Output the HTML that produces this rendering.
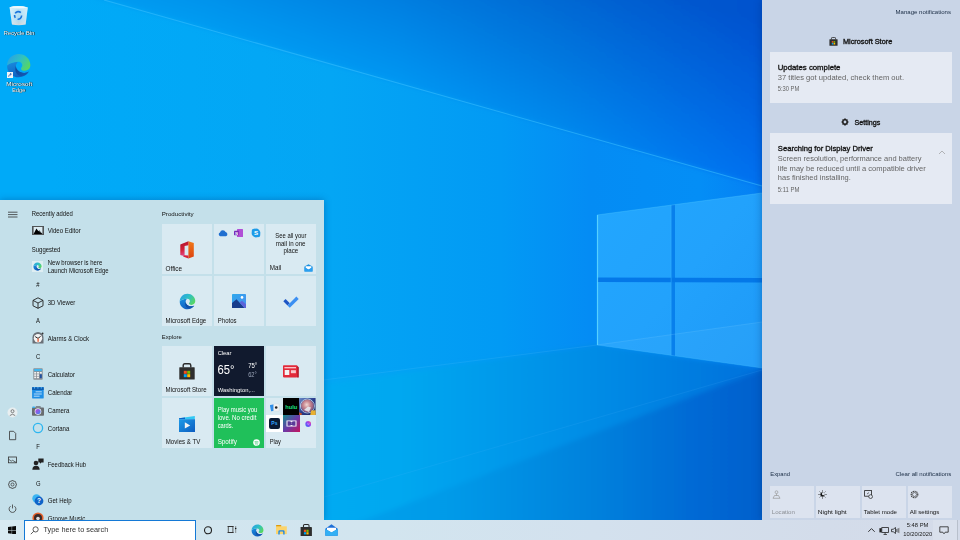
<!DOCTYPE html>
<html><head><meta charset="utf-8">
<style>
*{margin:0;padding:0;box-sizing:border-box}
html,body{width:960px;height:540px;overflow:hidden;font-family:"Liberation Sans",sans-serif;position:relative;background:#0a8ae6}
.abs{position:absolute}
#wall{position:absolute;left:0;top:0;width:960px;height:540px}
#start{position:absolute;left:0;top:200px;width:324px;height:320px;background:#c4e0ea;overflow:hidden;box-shadow:0 0 7px rgba(0,40,110,0.35)}
#ac{position:absolute;left:762px;top:0;width:198px;height:520px;background:#c9d5e7;box-shadow:-1px 0 7px rgba(0,40,110,0.3)}
#tb{position:absolute;left:0;top:520px;width:960px;height:20px;background:linear-gradient(90deg,#d1e6ef 0%,#d2e5ef 40%,#d3e1ee 62%,#d3dcea 86%,#d4dbe9 100%)}
.dlab{font-size:5.7px;color:#fff;text-shadow:0 0 0.6px rgba(0,0,0,0.5),0.4px 0.4px 0.4px rgba(0,0,0,0.4)}
.t{position:absolute;white-space:nowrap;color:#1a1a1a;line-height:1}
.sm6{font-size:6px;color:#1b1b1b}
.sm6c{font-size:6px;color:#1b1b1b}
.sm6w{font-size:6px;color:#fff}
.tile{position:absolute;width:50px;height:50px;background:#d9eaf2}
.card{background:#e5eaf3}
.qa{top:486px;width:44px;height:32px;background:#dce3ef}
</style></head><body>
<svg id="wall" width="960" height="540" viewBox="0 0 960 540">
<defs>
<filter id="bl" x="-10%" y="-10%" width="120%" height="120%"><feGaussianBlur stdDeviation="2.5"/></filter>
<filter id="bl3" x="-50%" y="-50%" width="200%" height="200%"><feGaussianBlur stdDeviation="14"/></filter>
<linearGradient id="gA" gradientUnits="userSpaceOnUse" x1="200" y1="0" x2="762" y2="0">
<stop offset="0" stop-color="#029cf2"/><stop offset="0.356" stop-color="#0496f2"/><stop offset="0.64" stop-color="#0488ec"/><stop offset="1" stop-color="#0670f0"/>
</linearGradient>
<linearGradient id="gAd" gradientUnits="userSpaceOnUse" x1="700" y1="168.5" x2="743.5" y2="14.6">
<stop offset="0" stop-color="#0528a0" stop-opacity="0"/><stop offset="1" stop-color="#0528a0" stop-opacity="0.42"/>
</linearGradient>
<linearGradient id="gB" gradientUnits="userSpaceOnUse" x1="0" y1="0" x2="760" y2="0">
<stop offset="0.066" stop-color="#00aaf8"/><stop offset="0.434" stop-color="#04a6f4"/><stop offset="0.658" stop-color="#029af4"/><stop offset="0.776" stop-color="#048cf4"/><stop offset="0.92" stop-color="#048ef6"/><stop offset="1" stop-color="#0580f4"/>
</linearGradient>
<linearGradient id="gC" gradientUnits="userSpaceOnUse" x1="324" y1="0" x2="762" y2="0">
<stop offset="0" stop-color="#04aaf2"/><stop offset="0.17" stop-color="#04a8f0"/><stop offset="0.68" stop-color="#0488e4"/><stop offset="1" stop-color="#0670dc"/>
</linearGradient>
<linearGradient id="gD" gradientUnits="userSpaceOnUse" x1="324" y1="0" x2="762" y2="0">
<stop offset="0" stop-color="#06a2ec"/><stop offset="0.29" stop-color="#069ae8"/><stop offset="0.63" stop-color="#0680dc"/><stop offset="0.86" stop-color="#0668d4"/><stop offset="1" stop-color="#0660cc"/>
</linearGradient>
<linearGradient id="gL" gradientUnits="userSpaceOnUse" x1="597" y1="215" x2="762" y2="350">
<stop offset="0" stop-color="#22a6fe"/><stop offset="0.5" stop-color="#22a2fc"/><stop offset="1" stop-color="#1e9af8"/>
</linearGradient>
</defs>
<rect width="960" height="540" fill="url(#gB)"/>
<g filter="url(#bl)">
<polygon points="-60,-60 960,-60 960,220 762,186 104,0 -60,-46" fill="url(#gA)"/>
<polygon points="-60,-60 960,-60 960,220 762,186 104,0 -60,-46" fill="url(#gAd)"/>
<polygon points="-60,438 597,345 762,368 1000,400 1000,600 -60,600" fill="url(#gC)"/>
<polygon points="-60,680 762,370 1000,380 1000,600 -60,600" fill="url(#gD)"/>
</g>
<polygon points="597,215 762,193 762,368 597,345" fill="url(#gL)"/>
<polygon points="597,345 762,322 762,368" fill="#40b0fc" opacity="0.25"/>
<polygon points="671,205 675,204.5 675,356 671,355.5" fill="#0880ec"/>
<polygon points="597,277.6 762,278 762,282.4 597,282" fill="#0478e8"/>
<line x1="104" y1="0" x2="762" y2="186" stroke="#3cc0ff" stroke-width="1.1" opacity="0.55"/>
<line x1="597.5" y1="215" x2="597.5" y2="345" stroke="#60d8ff" stroke-width="1.2" opacity="0.85"/>
<line x1="671.2" y1="205" x2="671.2" y2="355.5" stroke="#40c0ff" stroke-width="0.7" opacity="0.6"/>
<line x1="597" y1="215" x2="762" y2="193" stroke="#50c8ff" stroke-width="0.8" opacity="0.45"/>
<line x1="597" y1="345" x2="762" y2="368" stroke="#50c8ff" stroke-width="0.8" opacity="0.3"/>
<line x1="597" y1="345" x2="762" y2="322" stroke="#70c8ff" stroke-width="0.8" opacity="0.3"/>
<line x1="597" y1="345" x2="300" y2="383" stroke="#6ac8ff" stroke-width="1" opacity="0.15"/>
<line x1="762" y1="370" x2="300" y2="504" stroke="#5ab8ff" stroke-width="1" opacity="0.12"/>
</svg>
<!-- DESKTOP ICONS -->
<svg class="abs" style="left:9px;top:5px" width="20" height="21" viewBox="0 0 20 21"><defs><linearGradient id="rb" x1="0" y1="0" x2="0" y2="1"><stop offset="0" stop-color="#d4ecf8"/><stop offset="0.7" stop-color="#bfe0f2"/><stop offset="1" stop-color="#ecdcd4"/></linearGradient><linearGradient id="rb2" x1="0" y1="0" x2="1" y2="0"><stop offset="0" stop-color="#fff" stop-opacity="0.5"/><stop offset="0.5" stop-color="#fff" stop-opacity="0"/><stop offset="1" stop-color="#fff" stop-opacity="0.4"/></linearGradient></defs><path d="M0.6 2.2Q9 -0.2 18.8 2.4L16.6 19.6Q9.6 21 3 19.6Z" fill="url(#rb)" opacity="0.88"/><path d="M0.6 2.2Q9 -0.2 18.8 2.4L16.6 19.6Q9.6 21 3 19.6Z" fill="url(#rb2)"/><path d="M0.6 2.2Q9 -0.2 18.8 2.4Q9.6 4.6 0.6 2.2Z" fill="#eef8fc"/><path d="M6.2 8.4A3.6 3.6 0 0 1 11.8 7.6M12.6 10.6A3.6 3.6 0 0 1 8.6 14.2M6.4 12.8A3.6 3.6 0 0 1 5.6 10" fill="none" stroke="#1b74dc" stroke-width="1.6"/></svg>
<svg class="abs" style="left:6.3px;top:53.3px" width="25.4" height="25.4" viewBox="0 0 24 24"><use href="#edge"/></svg>
<div class="abs" style="left:7px;top:71.5px;width:6px;height:6px;background:#f2f4f6"></div>
<svg class="abs" style="left:7px;top:71.5px" width="6" height="6" viewBox="0 0 6 6"><path d="M1.6 4.8Q1.6 2.4 4 2.2M3 1.2L4.4 2.2L3.2 3.3" fill="none" stroke="#1a50a8" stroke-width="0.7"/></svg>
<div id="start"></div>
<!-- START MENU CONTENT -->
<svg width="0" height="0" style="position:absolute"><defs>
<linearGradient id="eg1" x1="0" y1="0.2" x2="1" y2="0.7"><stop offset="0" stop-color="#2aa0e4"/><stop offset="0.5" stop-color="#2fc0c4"/><stop offset="1" stop-color="#5ad85c"/></linearGradient>
<linearGradient id="eg2" x1="0" y1="0" x2="0.4" y2="1"><stop offset="0" stop-color="#1a8ee0"/><stop offset="1" stop-color="#1060c0"/></linearGradient>
<linearGradient id="eg3" x1="0" y1="0" x2="1" y2="0.3"><stop offset="0" stop-color="#0c4aa0"/><stop offset="1" stop-color="#1458b0"/></linearGradient>
<symbol id="edge" viewBox="0 0 24 24">
<path d="M1 12C1 18.5 6 23 12 23C16 23 19.6 21 21.6 17.6C20.4 18.4 18.8 18.8 17.2 18.8C13 18.8 9.4 16 9.4 12.4C9.4 10.6 10.4 9.2 11.6 8.2C6.2 8.4 2 10.4 1 12Z" fill="url(#eg2)"/>
<path d="M9.4 12.4C9.4 16 13 18.8 17.2 18.8C18.8 18.8 20.4 18.4 21.6 17.6C19.8 20.4 16.4 22.2 13 21.6C10.6 21 8.8 18.6 8.8 15.6C8.8 14.2 9 13.2 9.4 12.4Z" fill="url(#eg3)"/>
<path d="M1 12C2 10.4 6.2 8.4 11.6 8.2C14.4 8.2 15.6 10.2 15.4 12C15.2 13.2 14.2 13.8 14.2 14.8C14.2 15.8 15.4 16.8 17.6 16.8C20.6 16.8 23 14.8 23 11.4C23 5.6 18 1 12 1C5.8 1 1 5.8 1 12Z" fill="url(#eg1)"/>
</symbol>
</defs></svg>
<div id="sm">
<!-- left rail -->
<svg class="abs" style="left:7px;top:210px" width="12" height="9" viewBox="0 0 12 9"><path d="M1 2.2H10.5M1 4.6H10.5M1 7H10.5" stroke="#333" stroke-width="0.8" fill="none"/></svg>
<svg class="abs" style="left:6px;top:406px" width="13" height="13" viewBox="0 0 13 13"><circle cx="6.5" cy="6.5" r="5" fill="#e8eef0"/><circle cx="6.5" cy="5.2" r="1.5" fill="none" stroke="#555" stroke-width="0.7"/><path d="M3.8 9.6Q6.5 6.8 9.2 9.6" fill="none" stroke="#555" stroke-width="0.7"/></svg>
<svg class="abs" style="left:7px;top:430px" width="11" height="11" viewBox="0 0 11 11"><path d="M2.5 1.3H6.6L8.7 3.4V9.7H2.5Z" fill="none" stroke="#333" stroke-width="0.8"/></svg>
<svg class="abs" style="left:7px;top:455px" width="11" height="10" viewBox="0 0 11 10"><rect x="1.4" y="2" width="8" height="5.8" fill="none" stroke="#333" stroke-width="0.8"/><path d="M1.6 4.2L4.2 6.2L5.6 5.3L9.2 7.5" fill="none" stroke="#333" stroke-width="0.7"/></svg>
<svg class="abs" style="left:8px;top:479.6px" width="9" height="9" viewBox="0 0 9 9"><path d="M3.6 0.6H5.4L5.8 1.6L6.9 1.1L7.9 2.1L7.4 3.2L8.4 3.6V5.4L7.4 5.8L7.9 6.9L6.9 7.9L5.8 7.4L5.4 8.4H3.6L3.2 7.4L2.1 7.9L1.1 6.9L1.6 5.8L0.6 5.4V3.6L1.6 3.2L1.1 2.1L2.1 1.1L3.2 1.6Z" fill="none" stroke="#3a3a3a" stroke-width="0.75" stroke-linejoin="round"/><circle cx="4.5" cy="4.5" r="1.5" fill="none" stroke="#3a3a3a" stroke-width="0.75"/></svg>
<svg class="abs" style="left:8.2px;top:504px" width="9" height="9" viewBox="0 0 9 9"><path d="M2.6 2.2A3.4 3.4 0 1 0 6.4 2.2" fill="none" stroke="#3a3a3a" stroke-width="0.8"/><path d="M4.5 0.5V4.4" stroke="#3a3a3a" stroke-width="0.8"/></svg>

<svg class="abs" style="left:32px;top:226px" width="12" height="9" viewBox="0 0 12 9"><rect x="0" y="0" width="12" height="9" fill="#505456"/><rect x="1.6" y="1" width="8.8" height="7" fill="#dcecf2"/><path d="M1.6 8L4.4 2.4L6.4 5.2L7.2 4.2L10.4 8Z" fill="#000"/><path d="M7.4 4.8L8.4 6.6" stroke="#dcecf2" stroke-width="0.4"/></svg>
<div class="abs" style="left:32px;top:261px;width:11px;height:11px;background:#dfeef3"></div>
<svg class="abs" style="left:33px;top:262px" width="9" height="9" viewBox="0 0 24 24"><use href="#edge"/></svg>
<svg class="abs" style="left:32px;top:297px" width="12" height="12" viewBox="0 0 12 12"><path d="M6 0.8L11 3.4V8.8L6 11.3L1 8.8V3.4Z M1 3.4L6 6L11 3.4 M6 6V11.3" fill="none" stroke="#222" stroke-width="0.9"/></svg>
<svg class="abs" style="left:32px;top:332px" width="12" height="12" viewBox="0 0 12 12"><path d="M0.5 11.5V5.5A5.5 5.5 0 0 1 11.5 5.5V11.5Z" fill="#6b7178"/><circle cx="6" cy="6.3" r="4.2" fill="#f4f4f4"/><path d="M3.2 4.6L6 6.4L8.6 4.4" stroke="#222" stroke-width="1" fill="none"/><rect x="5.4" y="6.4" width="1.4" height="3.4" fill="#e8643c"/><circle cx="10.6" cy="1.5" r="0.9" fill="#333"/></svg>
<svg class="abs" style="left:33px;top:368px" width="10" height="12" viewBox="0 0 10 12"><rect x="0.3" y="0.3" width="9.4" height="11.4" rx="0.8" fill="#8a9096"/><rect x="1.2" y="1" width="7.6" height="2.2" fill="#3fb6f0"/><g fill="#f2f2f2"><rect x="1.2" y="4" width="2" height="1.6"/><rect x="4" y="4" width="2" height="1.6"/><rect x="6.8" y="4" width="2" height="1.6"/><rect x="1.2" y="6.3" width="2" height="1.6"/><rect x="4" y="6.3" width="2" height="1.6"/><rect x="1.2" y="8.6" width="2" height="1.6"/><rect x="4" y="8.6" width="2" height="1.6"/></g><rect x="6.8" y="6.3" width="2" height="3.9" fill="#1f4fa0"/></svg>
<svg class="abs" style="left:32px;top:386.5px" width="12" height="12" viewBox="0 0 12 12"><rect x="0.1" y="0.2" width="11.6" height="11.3" rx="0.4" fill="#1f8fe6"/><rect x="0.1" y="0.2" width="11.6" height="2.8" fill="#0d5cb0"/><g fill="#4ab0f4"><rect x="2" y="0" width="1" height="1.6"/><rect x="5.4" y="0" width="1" height="1.6"/><rect x="8.8" y="0" width="1" height="1.6"/></g><g stroke="#eaf6ff" stroke-width="0.75"><path d="M3.6 4.8H9.8M1.8 7H9.8M1.8 9.2H7.6"/></g></svg>
<svg class="abs" style="left:32px;top:405.5px" width="12" height="10" viewBox="0 0 12 10"><rect x="0" y="1.6" width="12" height="8.2" rx="0.8" fill="#686c70"/><path d="M3.2 1.6L4 0.2H8.4L9.2 1.6Z" fill="#686c70"/><rect x="0.4" y="0.4" width="2.6" height="1.6" rx="0.5" fill="#34aef0"/><defs><linearGradient id="lens" x1="0" y1="0" x2="1" y2="1"><stop offset="0" stop-color="#c040e0"/><stop offset="1" stop-color="#3a8af0"/></linearGradient></defs><circle cx="6" cy="5.6" r="3.3" fill="#e8eef6"/><circle cx="6" cy="5.6" r="2.6" fill="url(#lens)"/></svg>
<svg class="abs" style="left:32px;top:422px" width="12" height="12" viewBox="0 0 12 12"><circle cx="6" cy="6" r="4.6" fill="none" stroke="#2cb6f0" stroke-width="1.3"/></svg>
<svg class="abs" style="left:32px;top:458px" width="12" height="12" viewBox="0 0 12 12"><circle cx="4" cy="5" r="2.3" fill="#222"/><path d="M0.3 11.8Q0.5 7.8 4 7.8Q7.5 7.8 7.7 11.8Z" fill="#222"/><path d="M6.3 0.6H11.6V4.6H9.4L8 5.8V4.6H6.3Z" fill="#222"/></svg>
<svg class="abs" style="left:32px;top:494px" width="12" height="12" viewBox="0 0 12 12"><circle cx="4.5" cy="4.5" r="4.2" fill="#3ab4f2"/><circle cx="7" cy="7" r="4.4" fill="#1064c8"/><text x="7" y="9.4" font-size="6.5" font-family="Liberation Sans" font-weight="bold" fill="#fff" text-anchor="middle">?</text></svg>
<svg class="abs" style="left:32px;top:512px" width="12" height="12" viewBox="0 0 12 12"><circle cx="6" cy="6" r="5.6" fill="#e8622c"/><circle cx="6" cy="6" r="4" fill="#3a2a2a"/><circle cx="6" cy="6.5" r="1.8" fill="#e0e0e0"/></svg>

<!-- tiles -->
<div class="tile" style="left:162px;top:224px"></div>
<div class="tile" style="left:214px;top:224px"></div>
<div class="tile" style="left:266px;top:224px"></div>
<div class="tile" style="left:162px;top:276px"></div>
<div class="tile" style="left:214px;top:276px"></div>
<div class="tile" style="left:266px;top:276px"></div>
<div class="tile" style="left:162px;top:346px"></div>
<div class="tile" style="left:214px;top:346px;background:#111a2e"></div>
<div class="tile" style="left:266px;top:346px"></div>
<div class="tile" style="left:162px;top:398px"></div>
<div class="tile" style="left:214px;top:398px;background:#20c05a"></div>
<div class="tile" style="left:266px;top:398px"></div>

<!-- Office -->
<svg class="abs" style="left:180px;top:240.5px" width="14" height="18" viewBox="0 0 14 18"><defs><linearGradient id="ofr" x1="0" y1="0" x2="0" y2="1"><stop offset="0" stop-color="#f07a1a"/><stop offset="1" stop-color="#dc4210"/></linearGradient><linearGradient id="ofl" x1="0" y1="0" x2="0.3" y2="1"><stop offset="0" stop-color="#a8122a"/><stop offset="0.6" stop-color="#d42038"/><stop offset="1" stop-color="#e04a8a"/></linearGradient></defs><path d="M8.4 0.3L13.8 2V15.6L8.4 17.4Z" fill="url(#ofr)"/><path d="M8.4 0.3L0.3 3.6V14L4.6 15.2V5L8.4 4.2Z" fill="url(#ofl)"/><path d="M4.6 14.2L8.4 14.6V17.4L3 15.4Z" fill="#d8203a"/></svg>
<!-- onedrive / onenote / skype -->
<svg class="abs" style="left:218px;top:229px" width="10" height="8" viewBox="0 0 10 8"><path d="M2.2 7.2A2 2 0 0 1 2 3.4A3 3 0 0 1 7.6 3A2.2 2.2 0 0 1 8 7.2Z" fill="#1f6fd0"/></svg>
<svg class="abs" style="left:234px;top:229px" width="9" height="8" viewBox="0 0 9 8"><rect x="3" y="0" width="6" height="8" rx="0.5" fill="#b04fd6"/><rect x="0" y="1.8" width="5" height="4.4" rx="0.4" fill="#7a2bb8"/><text x="2.5" y="5.5" font-size="3.8" font-family="Liberation Sans" font-weight="bold" fill="#fff" text-anchor="middle">N</text></svg>
<svg class="abs" style="left:251px;top:228px" width="10" height="10" viewBox="0 0 10 10"><circle cx="5" cy="5" r="4.4" fill="#1e9be8"/><circle cx="3" cy="3" r="2.3" fill="#1e9be8"/><circle cx="7" cy="7" r="2.3" fill="#1e9be8"/><text x="5" y="7.3" font-size="6.2" font-family="Liberation Sans" font-weight="bold" fill="#fff" text-anchor="middle">S</text></svg>
<!-- Mail tile -->
<svg class="abs" style="left:304px;top:264px" width="9" height="8" viewBox="0 0 9 8"><path d="M0.5 2.5L4.5 0.3L8.5 2.5V7.6H0.5Z" fill="#1a8fe0"/><path d="M1.6 2.2H7.4V4.2L4.5 5.8L1.6 4.2Z" fill="#fff"/><path d="M0.5 3L4.5 5.6L8.5 3V7.6H0.5Z" fill="#2a9ff0"/></svg>
<!-- Edge tile -->
<svg class="abs" style="left:178.5px;top:292.5px" width="17" height="17" viewBox="0 0 24 24"><use href="#edge"/></svg>
<!-- Photos -->
<svg class="abs" style="left:232px;top:294px" width="14" height="14" viewBox="0 0 14 14"><defs><linearGradient id="ph" x1="0" y1="0" x2="1" y2="1"><stop offset="0" stop-color="#2fa9ec"/><stop offset="1" stop-color="#4a8ef0"/></linearGradient></defs><rect x="0" y="0" width="14" height="14" rx="0.8" fill="url(#ph)"/><path d="M0 14V9L4.5 5.2L12.5 14Z" fill="#163c8c"/><path d="M7.5 8.5L10 6.8L14 10.2V14H12.5Z" fill="#5c62d8"/><circle cx="10" cy="3.4" r="1.3" fill="#fff"/></svg>
<!-- To Do -->
<svg class="abs" style="left:283px;top:295px" width="16" height="13" viewBox="0 0 16 13"><path d="M0.3 6.3L2.6 4L6.8 8.2L4.5 10.5Z" fill="#1d55c4"/><path d="M4.5 10.5L13.4 1.6L15.7 3.9L6.8 12.8L4.5 10.5Z" fill="#3b8ff2"/></svg>

<!-- Store tile -->
<svg class="abs" style="left:179px;top:363px" width="16" height="17" viewBox="0 0 16 17"><path d="M4.2 4.5V2.4Q4.2 0.8 5.8 0.8H10.2Q11.8 0.8 11.8 2.4V4.5" fill="none" stroke="#2b2b2b" stroke-width="1.4"/><rect x="0.3" y="4.2" width="15.4" height="12.3" rx="0.6" fill="#2e2e2e"/><rect x="4.8" y="7.8" width="3" height="3" fill="#f25022"/><rect x="8.2" y="7.8" width="3" height="3" fill="#7fba00"/><rect x="4.8" y="11.2" width="3" height="3" fill="#00a4ef"/><rect x="8.2" y="11.2" width="3" height="3" fill="#ffb900"/></svg>
<!-- Weather -->
<!-- News -->
<svg class="abs" style="left:283px;top:365px" width="16" height="13" viewBox="0 0 16 13"><path d="M14 0.8L15.8 2.2V12.4H14Z" fill="#b01424"/><rect x="0" y="0.2" width="14.4" height="12.2" rx="0.8" fill="#e22a3a"/><rect x="1.4" y="2.2" width="11.6" height="1.1" fill="#ffe8ea"/><rect x="1.7" y="5" width="4.6" height="5" fill="#f4f4f4"/><rect x="7.9" y="5.2" width="5" height="3" fill="#f8c8cc"/></svg>
<!-- Movies -->
<svg class="abs" style="left:179px;top:415.5px" width="16" height="16" viewBox="0 0 16 16"><defs><linearGradient id="mv" x1="0" y1="0" x2="1" y2="1"><stop offset="0" stop-color="#1d9be8"/><stop offset="1" stop-color="#0c5cc0"/></linearGradient></defs><path d="M0 2.2L15.8 0V3.2H0Z" fill="#32c8f4"/><path d="M0 2.2L6 1.4V3.2H0Z" fill="#0c62c8"/><rect x="0" y="3.2" width="16" height="12.8" fill="url(#mv)"/><path d="M5.8 6.2L11.2 9.4L5.8 12.6Z" fill="#f4f4f4"/></svg>
<!-- Spotify -->
<svg class="abs" style="left:252.5px;top:438.5px" width="7" height="7" viewBox="0 0 7 7"><circle cx="3.5" cy="3.5" r="3.3" fill="#fff"/><path d="M1.5 2.7Q3.8 2 5.6 3M1.8 3.9Q3.6 3.4 5.2 4.2M2 5Q3.4 4.7 4.8 5.3" stroke="#1ebe5a" stroke-width="0.55" fill="none"/></svg>
<!-- Play -->
<svg class="abs" style="left:269.5px;top:402.5px" width="10" height="9" viewBox="0 0 10 9"><rect x="0.5" y="1.5" width="5" height="6.5" rx="0.5" fill="#2f8ee8" transform="rotate(-12 3 5)"/><rect x="3.5" y="1" width="5.5" height="7" rx="0.5" fill="#f2f2f2" stroke="#ccc" stroke-width="0.3"/><circle cx="6.2" cy="4.5" r="1.3" fill="#222"/></svg>
<div class="abs" style="left:282.5px;top:398px;width:17px;height:17px;background:#000"></div>
<svg class="abs" style="left:282.5px;top:398px" width="17" height="17" viewBox="0 0 17 17"><text x="2.3" y="10.9" font-family="Liberation Sans" font-size="5.6" font-weight="bold" fill="#1ce783" textLength="12" lengthAdjust="spacingAndGlyphs">hulu</text></svg>
<svg class="abs" style="left:299.4px;top:398px" width="16.6" height="17" viewBox="0 0 16.6 17"><defs><linearGradient id="gmb" x1="0" y1="0" x2="1" y2="1"><stop offset="0" stop-color="#6a8ac8"/><stop offset="0.5" stop-color="#2a3c8a"/><stop offset="1" stop-color="#1a2a60"/></linearGradient><radialGradient id="gmf" cx="0.45" cy="0.4" r="0.55"><stop offset="0" stop-color="#f0d8d4"/><stop offset="0.5" stop-color="#c88890"/><stop offset="1" stop-color="#8a5a80"/></radialGradient></defs><rect width="16.6" height="17" fill="url(#gmb)"/><circle cx="8.4" cy="8" r="7" fill="none" stroke="#b8d4ec" stroke-width="0.9"/><circle cx="8.4" cy="8" r="6.4" fill="url(#gmf)"/><path d="M5 12L9 8.5L12 9.6L10 14Z" fill="#e8eef4" opacity="0.85"/><path d="M12.2 12.6L16.6 12.2V17H11.2Z" fill="#e8b030"/><path d="M0.2 14.2L3.2 15.8L2.4 17H0.2Z" fill="#d05020"/></svg>
<div class="abs" style="left:266px;top:415px;width:16.5px;height:17px;background:#fff"></div>
<div class="abs" style="left:268.8px;top:417.8px;width:11px;height:11px;background:#0a1a34;border-radius:2px"></div>
<div class="tt" style="position:absolute;white-space:nowrap;line-height:1;left:271.3px;top:420.5px;font-size:5px;font-weight:bold;color:#31a8ff">Ps</div>
<svg class="abs" style="left:282.5px;top:415px" width="17" height="17" viewBox="0 0 17 17"><defs><linearGradient id="db" x1="0" y1="0" x2="1" y2="1"><stop offset="0" stop-color="#148c8c"/><stop offset="0.5" stop-color="#6a3aa8"/><stop offset="1" stop-color="#c8145a"/></linearGradient></defs><rect width="17" height="17" fill="url(#db)"/><rect x="3.5" y="5.5" width="10" height="6" fill="#fff"/><path d="M4.5 6.2H6.5A2.2 2.3 0 0 1 6.5 10.8H4.5Z M12.5 6.2H10.5A2.2 2.3 0 0 0 10.5 10.8H12.5Z" fill="#5a3a98"/></svg>
<svg class="abs" style="left:304.5px;top:420.5px" width="6.5" height="6" viewBox="0 0 6.5 6"><defs><linearGradient id="ms" x1="0" y1="1" x2="1" y2="0"><stop offset="0" stop-color="#2a6af8"/><stop offset="0.6" stop-color="#a040f0"/><stop offset="1" stop-color="#ff6070"/></linearGradient></defs><circle cx="3.25" cy="3" r="2.9" fill="url(#ms)"/><path d="M1.6 3.6L2.8 2.4L3.6 3.1L4.9 2.4L3.7 3.6L2.9 2.9Z" fill="#fff"/></svg>
</div>
<div id="ac"></div>
<!-- ACTION CENTER CONTENT -->
<svg class="abs" style="left:828.5px;top:36.5px" width="9" height="9" viewBox="0 0 16 17"><path d="M4.2 4.5V2.4Q4.2 0.8 5.8 0.8H10.2Q11.8 0.8 11.8 2.4V4.5" fill="none" stroke="#2b2b2b" stroke-width="1.6"/><rect x="0.3" y="4.2" width="15.4" height="12.3" rx="0.6" fill="#2e2e2e"/><rect x="4.8" y="7.8" width="3" height="3" fill="#f25022"/><rect x="8.2" y="7.8" width="3" height="3" fill="#7fba00"/><rect x="4.8" y="11.2" width="3" height="3" fill="#00a4ef"/><rect x="8.2" y="11.2" width="3" height="3" fill="#ffb900"/></svg>
<div class="abs card" style="left:770px;top:52px;width:182px;height:50.5px"></div>
<svg class="abs" style="left:840.5px;top:118px" width="8" height="8" viewBox="0 0 8 8"><path d="M3.2 0.6H4.8L5.1 1.5L6 1.1L6.9 2L6.5 2.9L7.4 3.2V4.8L6.5 5.1L6.9 6L6 6.9L5.1 6.5L4.8 7.4H3.2L2.9 6.5L2 6.9L1.1 6L1.5 5.1L0.6 4.8V3.2L1.5 2.9L1.1 2L2 1.1L2.9 1.5Z" fill="#222"/><circle cx="4" cy="4" r="1.4" fill="#c9d5e7"/></svg>
<div class="abs card" style="left:770px;top:133px;width:182px;height:70.5px"></div>
<svg class="abs" style="left:938px;top:149.5px" width="8" height="5" viewBox="0 0 8 5"><path d="M1 4L4 1L7 4" fill="none" stroke="#999" stroke-width="0.7"/></svg>
<div class="abs qa" style="left:770px"></div>
<div class="abs qa" style="left:816px"></div>
<div class="abs qa" style="left:862px"></div>
<div class="abs qa" style="left:908px"></div>
<svg class="abs" style="left:771.5px;top:489.5px" width="9" height="9" viewBox="0 0 9 9"><circle cx="4.5" cy="2.2" r="1.4" fill="none" stroke="#999" stroke-width="0.7"/><path d="M4.5 3.6V5.5M1 8.3L2.5 5.5H6.5L8 8.3Z" fill="none" stroke="#999" stroke-width="0.7"/></svg>
<svg class="abs" style="left:817.5px;top:489.5px" width="9" height="9" viewBox="0 0 9 9"><circle cx="4.5" cy="4.5" r="2.2" fill="#111"/><g stroke="#111" stroke-width="0.7"><path d="M4.5 0.4V1.6M4.5 7.4V8.6M0.4 4.5H1.6M7.4 4.5H8.6M1.6 1.6L2.4 2.4M6.6 6.6L7.4 7.4M1.6 7.4L2.4 6.6M6.6 2.4L7.4 1.6"/></g><circle cx="5.4" cy="3.8" r="1.5" fill="#dde4ee"/></svg>
<svg class="abs" style="left:863.5px;top:489.5px" width="9" height="9" viewBox="0 0 9 9"><rect x="0.6" y="0.6" width="7" height="5.6" fill="none" stroke="#222" stroke-width="0.8"/><path d="M3 4L5 2.6" stroke="#222" stroke-width="0.6"/><circle cx="6.6" cy="6.6" r="1.9" fill="#dde4ee" stroke="#222" stroke-width="0.7"/></svg>
<svg class="abs" style="left:909.5px;top:489.5px" width="9" height="9" viewBox="0 0 9 9"><circle cx="4.5" cy="4.5" r="3.3" fill="none" stroke="#333" stroke-width="1.1" stroke-dasharray="1.2 0.7"/><circle cx="4.5" cy="4.5" r="2" fill="none" stroke="#333" stroke-width="0.6"/></svg>
<div id="tb"></div>
<!-- TASKBAR CONTENT -->
<div class="abs" style="left:0;top:520px;width:24px;height:20px;background:#d8eaf2"></div>
<svg class="abs" style="left:7.8px;top:525.7px" width="8.4" height="8.4" viewBox="0 0 8.4 8.4"><path d="M0 1.1L3.7 0.6V4H0Z M4.1 0.5L8.4 0V4H4.1Z M0 4.4H3.7V7.8L0 7.3Z M4.1 4.4H8.4V8.4L4.1 7.9Z" fill="#0a0a0a"/></svg>
<div class="abs" style="left:24px;top:520px;width:172px;height:20px;background:#fff;border:1.6px solid #1479d6;border-bottom:none"></div>
<svg class="abs" style="left:29.5px;top:526px" width="9" height="9" viewBox="0 0 9 9"><circle cx="5.6" cy="3.4" r="2.6" fill="none" stroke="#333" stroke-width="0.8"/><path d="M3.7 5.3L0.8 8.2" stroke="#333" stroke-width="0.8"/></svg>
<svg class="abs" style="left:203px;top:526px" width="10" height="9" viewBox="0 0 10 9"><circle cx="5" cy="4.3" r="3.5" fill="none" stroke="#222" stroke-width="1.1"/></svg>
<svg class="abs" style="left:227px;top:525px" width="10" height="9" viewBox="0 0 10 9"><path d="M0.6 1.5H6.6M0.6 7.5H6.6" stroke="#333" stroke-width="1.1"/><path d="M1.3 1.5V7.5M5.9 1.5V7.5" stroke="#333" stroke-width="0.8"/><path d="M8.7 1V8" stroke="#555" stroke-width="0.6"/><circle cx="8.7" cy="3.6" r="0.75" fill="#111"/></svg>
<svg class="abs" style="left:251px;top:523.5px" width="13" height="13" viewBox="0 0 24 24"><use href="#edge"/></svg>
<svg class="abs" style="left:276.4px;top:525px" width="11" height="10" viewBox="0 0 11 10"><rect x="0" y="0" width="5.2" height="2" rx="0.6" fill="#dc9a0c"/><rect x="0" y="1.3" width="10.8" height="7.8" fill="#fcd46c"/><path d="M2.3 9.4V6.6Q2.3 5.2 3.7 5.2H7.2Q8.6 5.2 8.6 6.6V9.4H7.2V7.2Q7.2 6.6 6.6 6.6H4.3Q3.7 6.6 3.7 7.2V9.4Z" fill="#1e88e5"/></svg>
<svg class="abs" style="left:300px;top:523.5px" width="12.5" height="12.5" viewBox="0 0 16 17"><path d="M4.2 4.5V2.4Q4.2 0.8 5.8 0.8H10.2Q11.8 0.8 11.8 2.4V4.5" fill="none" stroke="#2b2b2b" stroke-width="1.4"/><rect x="0.3" y="4.2" width="15.4" height="12.3" rx="0.6" fill="#2e2e2e"/><rect x="4.8" y="7.8" width="3" height="3" fill="#f25022"/><rect x="8.2" y="7.8" width="3" height="3" fill="#7fba00"/><rect x="4.8" y="11.2" width="3" height="3" fill="#00a4ef"/><rect x="8.2" y="11.2" width="3" height="3" fill="#ffb900"/></svg>
<svg class="abs" style="left:324.5px;top:524px" width="13" height="12" viewBox="0 0 13 12"><path d="M0.3 4.8L6.5 0.3L12.7 4.8V11.7H0.3Z" fill="#1d6fd8"/><path d="M2 3.8H11V6L6.5 8.6L2 6Z" fill="#fff"/><path d="M0.3 4.8L6.5 8.6L12.7 4.8V11.7H0.3Z" fill="#32b0f4"/></svg>
<!-- tray -->
<svg class="abs" style="left:867px;top:526.5px" width="9" height="6" viewBox="0 0 9 6"><path d="M1.3 4.8L4.5 1.6L7.7 4.8" fill="none" stroke="#222" stroke-width="0.9"/></svg>
<svg class="abs" style="left:879px;top:526.5px" width="10" height="8" viewBox="0 0 10 8"><rect x="2.8" y="0.6" width="6.6" height="4.8" fill="none" stroke="#222" stroke-width="0.8"/><rect x="0.4" y="1.2" width="2.2" height="4.2" fill="#222"/><path d="M4.5 7.6H8M6.1 5.4V7.6" stroke="#222" stroke-width="0.8"/></svg>
<svg class="abs" style="left:891px;top:526.5px" width="9" height="7" viewBox="0 0 9 7"><path d="M0.5 2.3H2.2L4.5 0.5V6.5L2.2 4.7H0.5Z" fill="none" stroke="#222" stroke-width="0.8"/><path d="M5.8 2V5M7.2 1.2V5.8" stroke="#222" stroke-width="0.7"/><path d="M8.4 0.8V6.2" stroke="#999" stroke-width="0.6"/></svg>
<div class="abs" style="left:933px;top:520px;width:24px;height:20px;background:#d9e0ec"></div>
<svg class="abs" style="left:938.5px;top:525.5px" width="10" height="9" viewBox="0 0 10 9"><path d="M0.8 0.8H9.2V6.2H6.2L5 7.8L3.8 6.2H0.8Z" fill="none" stroke="#222" stroke-width="0.8"/></svg>
<div class="abs" style="left:957px;top:520px;width:1px;height:20px;background:#b8c0cc"></div>
<svg id="txt" width="960" height="540" viewBox="0 0 960 540" style="position:absolute;left:0;top:0;will-change:transform" font-family="Liberation Sans, sans-serif">
<defs><clipPath id="cl520"><rect x="0" y="0" width="960" height="520"/></clipPath><filter id="dsh" x="-20%" y="-50%" width="140%" height="200%"><feDropShadow dx="0.5" dy="0.6" stdDeviation="0.5" flood-color="#000" flood-opacity="1"/></filter></defs>
<text x="31.65" y="215.60" font-size="6.4" fill="#111111" textLength="41.10" lengthAdjust="spacingAndGlyphs">Recently added</text>
<text x="47.65" y="232.60" font-size="6.6" fill="#111111" textLength="33.10" lengthAdjust="spacingAndGlyphs">Video Editor</text>
<text x="31.75" y="251.50" font-size="6.4" fill="#111111" textLength="28.70" lengthAdjust="spacingAndGlyphs">Suggested</text>
<text x="47.75" y="264.70" font-size="6.6" fill="#111111" textLength="54.50" lengthAdjust="spacingAndGlyphs">New browser is here</text>
<text x="47.75" y="272.70" font-size="6.6" fill="#111111" textLength="60.80" lengthAdjust="spacingAndGlyphs">Launch Microsoft Edge</text>
<text x="36.15" y="286.70" font-size="6.4" fill="#111111" textLength="3.27" lengthAdjust="spacingAndGlyphs">#</text>
<text x="47.75" y="304.70" font-size="6.6" fill="#111111" textLength="27.50" lengthAdjust="spacingAndGlyphs">3D Viewer</text>
<text x="36.05" y="323.40" font-size="6.4" fill="#111111" textLength="3.93" lengthAdjust="spacingAndGlyphs">A</text>
<text x="47.75" y="340.50" font-size="6.6" fill="#111111" textLength="41.20" lengthAdjust="spacingAndGlyphs">Alarms &amp; Clock</text>
<text x="36.05" y="359.40" font-size="6.4" fill="#111111" textLength="4.25" lengthAdjust="spacingAndGlyphs">C</text>
<text x="47.75" y="376.70" font-size="6.6" fill="#111111" textLength="27.20" lengthAdjust="spacingAndGlyphs">Calculator</text>
<text x="47.75" y="394.70" font-size="6.6" fill="#111111" textLength="24.64" lengthAdjust="spacingAndGlyphs">Calendar</text>
<text x="47.75" y="412.70" font-size="6.6" fill="#111111" textLength="21.60" lengthAdjust="spacingAndGlyphs">Camera</text>
<text x="47.75" y="430.50" font-size="6.6" fill="#111111" textLength="21.60" lengthAdjust="spacingAndGlyphs">Cortana</text>
<text x="36.25" y="449.40" font-size="6.4" fill="#111111" textLength="3.60" lengthAdjust="spacingAndGlyphs">F</text>
<text x="47.75" y="466.70" font-size="6.6" fill="#111111" textLength="38.30" lengthAdjust="spacingAndGlyphs">Feedback Hub</text>
<text x="36.05" y="485.50" font-size="6.4" fill="#111111" textLength="4.58" lengthAdjust="spacingAndGlyphs">G</text>
<text x="47.75" y="503.00" font-size="6.6" fill="#111111" textLength="23.80" lengthAdjust="spacingAndGlyphs">Get Help</text>
<text x="47.75" y="520.70" font-size="6.6" fill="#111111" textLength="37.45" lengthAdjust="spacingAndGlyphs" clip-path="url(#cl520)">Groove Music</text>
<text x="161.75" y="216.10" font-size="6.2" fill="#111111" textLength="31.90" lengthAdjust="spacingAndGlyphs">Productivity</text>
<text x="165.55" y="270.70" font-size="6.5" fill="#111111" textLength="16.50" lengthAdjust="spacingAndGlyphs">Office</text>
<text x="275.35" y="237.70" font-size="6.5" fill="#111111" textLength="31.10" lengthAdjust="spacingAndGlyphs">See all your</text>
<text x="275.75" y="245.50" font-size="6.5" fill="#111111" textLength="29.80" lengthAdjust="spacingAndGlyphs">mail in one</text>
<text x="283.45" y="253.30" font-size="6.5" fill="#111111" textLength="14.80" lengthAdjust="spacingAndGlyphs">place</text>
<text x="269.75" y="270.20" font-size="6.5" fill="#111111" textLength="11.50" lengthAdjust="spacingAndGlyphs">Mail</text>
<text x="165.55" y="322.60" font-size="6.5" fill="#111111" textLength="40.70" lengthAdjust="spacingAndGlyphs">Microsoft Edge</text>
<text x="217.85" y="322.60" font-size="6.5" fill="#111111" textLength="18.70" lengthAdjust="spacingAndGlyphs">Photos</text>
<text x="161.75" y="338.50" font-size="6.2" fill="#111111" textLength="19.90" lengthAdjust="spacingAndGlyphs">Explore</text>
<text x="165.55" y="392.30" font-size="6.5" fill="#111111" textLength="41.10" lengthAdjust="spacingAndGlyphs">Microsoft Store</text>
<text x="217.65" y="355.00" font-size="6.0" fill="#ffffff" textLength="13.70" lengthAdjust="spacingAndGlyphs">Clear</text>
<text x="217.45" y="374.40" font-size="12.5" fill="#ffffff" textLength="17.00" lengthAdjust="spacingAndGlyphs">65°</text>
<text x="248.15" y="368.40" font-size="6.5" fill="#ffffff" textLength="9.10" lengthAdjust="spacingAndGlyphs">75°</text>
<text x="248.15" y="376.70" font-size="6.5" fill="#9aa4b8" textLength="8.60" lengthAdjust="spacingAndGlyphs">62°</text>
<text x="217.65" y="392.00" font-size="6.0" fill="#ffffff" textLength="37.30" lengthAdjust="spacingAndGlyphs">Washington,...</text>
<text x="165.75" y="443.70" font-size="6.5" fill="#111111" textLength="34.50" lengthAdjust="spacingAndGlyphs">Movies &amp; TV</text>
<text x="217.65" y="412.05" font-size="6.5" fill="#ffffff" textLength="39.60" lengthAdjust="spacingAndGlyphs">Play music you</text>
<text x="217.65" y="419.90" font-size="6.5" fill="#ffffff" textLength="38.70" lengthAdjust="spacingAndGlyphs">love. No credit</text>
<text x="217.65" y="427.80" font-size="6.5" fill="#ffffff" textLength="15.60" lengthAdjust="spacingAndGlyphs">cards.</text>
<text x="217.65" y="444.00" font-size="6.5" fill="#ffffff" textLength="19.30" lengthAdjust="spacingAndGlyphs">Spotify</text>
<text x="269.75" y="443.70" font-size="6.5" fill="#111111" textLength="11.20" lengthAdjust="spacingAndGlyphs">Play</text>
<text x="895.50" y="14.45" font-size="6.1" fill="#1a2c44" textLength="55.50" lengthAdjust="spacingAndGlyphs">Manage notifications</text>
<text x="842.95" y="43.55" font-size="6.8" fill="#151515" stroke="#151515" stroke-width="0.32" textLength="49.30" lengthAdjust="spacingAndGlyphs">Microsoft Store</text>
<text x="777.75" y="69.50" font-size="7.2" fill="#151515" stroke="#151515" stroke-width="0.32" textLength="62.70" lengthAdjust="spacingAndGlyphs">Updates complete</text>
<text x="777.75" y="79.50" font-size="7.2" fill="#646464" textLength="126.25" lengthAdjust="spacingAndGlyphs">37 titles got updated, check them out.</text>
<text x="777.75" y="90.90" font-size="6.3" fill="#646464" textLength="21.50" lengthAdjust="spacingAndGlyphs">5:30 PM</text>
<text x="854.55" y="124.90" font-size="6.5" fill="#151515" stroke="#151515" stroke-width="0.32" textLength="25.70" lengthAdjust="spacingAndGlyphs">Settings</text>
<text x="777.85" y="150.60" font-size="7.2" fill="#151515" stroke="#151515" stroke-width="0.32" textLength="95.00" lengthAdjust="spacingAndGlyphs">Searching for Display Driver</text>
<text x="777.85" y="160.50" font-size="7.2" fill="#646464" textLength="143.60" lengthAdjust="spacingAndGlyphs">Screen resolution, performance and battery</text>
<text x="777.85" y="170.60" font-size="7.2" fill="#646464" textLength="148.00" lengthAdjust="spacingAndGlyphs">life may be reduced until a compatible driver</text>
<text x="777.85" y="180.30" font-size="7.2" fill="#646464" textLength="73.00" lengthAdjust="spacingAndGlyphs">has finished installing.</text>
<text x="777.85" y="191.70" font-size="6.3" fill="#646464" textLength="21.50" lengthAdjust="spacingAndGlyphs">5:11 PM</text>
<text x="770.35" y="475.70" font-size="6.0" fill="#1a2c44" textLength="19.70" lengthAdjust="spacingAndGlyphs">Expand</text>
<text x="895.55" y="475.70" font-size="6.0" fill="#1a2c44" textLength="55.70" lengthAdjust="spacingAndGlyphs">Clear all notifications</text>
<text x="771.75" y="514.40" font-size="6.2" fill="#8c9096" textLength="23.20" lengthAdjust="spacingAndGlyphs">Location</text>
<text x="817.75" y="514.40" font-size="6.2" fill="#111111" textLength="28.90" lengthAdjust="spacingAndGlyphs">Night light</text>
<text x="863.75" y="514.40" font-size="6.2" fill="#111111" textLength="33.20" lengthAdjust="spacingAndGlyphs">Tablet mode</text>
<text x="909.75" y="514.40" font-size="6.2" fill="#111111" textLength="29.50" lengthAdjust="spacingAndGlyphs">All settings</text>
<text x="43.50" y="532.45" font-size="7.2" fill="#333333" textLength="64.75" lengthAdjust="spacingAndGlyphs">Type here to search</text>
<text x="906.75" y="527.40" font-size="6.0" fill="#1a1a1a" textLength="21.70" lengthAdjust="spacingAndGlyphs">5:48 PM</text>
<text x="903.25" y="536.40" font-size="6.0" fill="#1a1a1a" textLength="28.90" lengthAdjust="spacingAndGlyphs">10/20/2020</text>
<text x="4.30" y="35.30" font-size="5.9" fill="#000" fill-opacity="0.75" stroke="#000" stroke-opacity="0.35" stroke-width="0.5" textLength="30.70" lengthAdjust="spacingAndGlyphs">Recycle Bin</text>
<text x="3.75" y="34.70" font-size="5.9" fill="#fff" textLength="30.70" lengthAdjust="spacingAndGlyphs">Recycle Bin</text>
<text x="6.80" y="86.30" font-size="6.0" fill="#000" fill-opacity="0.75" stroke="#000" stroke-opacity="0.35" stroke-width="0.5" textLength="26.00" lengthAdjust="spacingAndGlyphs">Microsoft</text>
<text x="6.25" y="85.70" font-size="6.0" fill="#fff" textLength="26.00" lengthAdjust="spacingAndGlyphs">Microsoft</text>
<text x="12.80" y="92.30" font-size="6.0" fill="#000" fill-opacity="0.75" stroke="#000" stroke-opacity="0.35" stroke-width="0.5" textLength="13.00" lengthAdjust="spacingAndGlyphs">Edge</text>
<text x="12.25" y="91.70" font-size="6.0" fill="#fff" textLength="13.00" lengthAdjust="spacingAndGlyphs">Edge</text>
</svg>
</body></html>
